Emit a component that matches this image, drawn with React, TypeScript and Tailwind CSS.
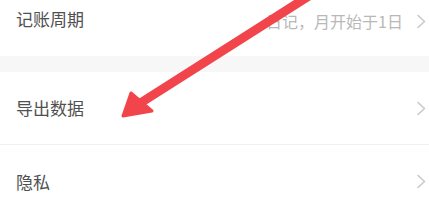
import React from 'react';

const font = { fontFamily: '"Noto Sans CJK SC", "Noto Sans", sans-serif' };

function Chevron() {
  return (
    <svg width="10" height="15" viewBox="0 0 10 15" className="shrink-0">
      <path d="M2 1.5 L8.5 7.5 L2 13.5" fill="none" stroke="#c9c9c9" strokeWidth="1.6" strokeLinecap="round" strokeLinejoin="round" />
    </svg>
  );
}

export default function App() {
  return (
    <div className="relative w-[429px] h-[218px] overflow-hidden bg-white" style={font}>
      {/* 记账周期 */}
      <div className="flex items-start justify-between h-[56px] pt-[6px] pl-[16px] pr-[3px]">
        <span className="text-[17px] text-[#505050]">记账周期</span>
        <div className="flex items-center gap-[13px] pt-[3px]">
          <span className="text-[16px] text-[#b8b8b8]">日记，月开始于1日</span>
          <Chevron />
        </div>
      </div>

      <div className="h-[16px] bg-[#f7f7f7]" />

      {/* 导出数据 */}
      <div className="flex items-center justify-between h-[73px] pl-[16px] pr-[3px] border-b border-[#f0f0f0]">
        <span className="text-[17px] text-[#505050]">导出数据</span>
        <Chevron />
      </div>

      {/* 隐私 */}
      <div className="flex items-center justify-between h-[73px] pl-[16px] pr-[3px]">
        <span className="text-[17px] text-[#505050]">隐私</span>
        <Chevron />
      </div>

      {/* red annotation arrow */}
      <svg className="absolute left-0 top-0 pointer-events-none" width="429" height="218" viewBox="0 0 429 218">
        <line x1="312" y1="-6" x2="142" y2="102" stroke="#f2444b" strokeWidth="9" strokeLinecap="round" />
        <polygon points="123,116 131,93 152,111" fill="#f2444b" stroke="#f2444b" strokeWidth="3" strokeLinejoin="round" />
      </svg>
    </div>
  );
}
